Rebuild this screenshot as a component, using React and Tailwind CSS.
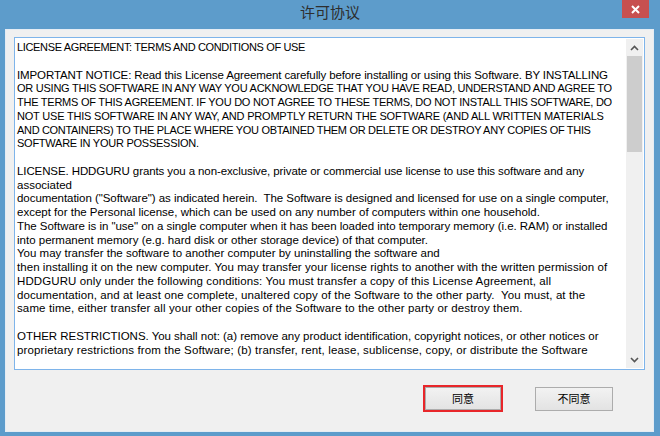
import React from "react";

// [text, size/tracking classes] — the original font is Tahoma: narrow capitals, wide lowercase
const CAPS = "text-[11px] tracking-[-0.25px]";
const MIX = "text-[11.5px]";

const LINES = [
  ["LICENSE AGREEMENT: TERMS AND CONDITIONS OF USE", "text-[11px] tracking-[-0.35px]"],
  ["", MIX],
  ["IMPORTANT NOTICE: Read this License Agreement carefully before installing or using this Software. BY INSTALLING", "text-[11.5px] tracking-[-0.12px]"],
  ["OR USING THIS SOFTWARE IN ANY WAY YOU ACKNOWLEDGE THAT YOU HAVE READ, UNDERSTAND AND AGREE TO", CAPS],
  ["THE TERMS OF THIS AGREEMENT. IF YOU DO NOT AGREE TO THESE TERMS, DO NOT INSTALL THIS SOFTWARE, DO", CAPS],
  ["NOT USE THIS SOFTWARE IN ANY WAY, AND PROMPTLY RETURN THE SOFTWARE (AND ALL WRITTEN MATERIALS", "text-[11px] tracking-[-0.2px]"],
  ["AND CONTAINERS) TO THE PLACE WHERE YOU OBTAINED THEM OR DELETE OR DESTROY ANY COPIES OF THIS", "text-[11px] tracking-[-0.32px]"],
  ["SOFTWARE IN YOUR POSSESSION.", CAPS],
  ["", MIX],
  ["LICENSE. HDDGURU grants you a non-exclusive, private or commercial use license to use this software and any", "text-[11.5px] tracking-[-0.1px]"],
  ["associated", MIX],
  ["documentation (\"Software\") as indicated herein.  The Software is designed and licensed for use on a single computer,", "text-[11.5px] tracking-[-0.05px]"],
  ["except for the Personal license, which can be used on any number of computers within one household.", MIX],
  ["The Software is in \"use\" on a single computer when it has been loaded into temporary memory (i.e. RAM) or installed", "text-[11.5px] tracking-[-0.04px]"],
  ["into permanent memory (e.g. hard disk or other storage device) of that computer.", MIX],
  ["You may transfer the software to another computer by uninstalling the software and", MIX],
  ["then installing it on the new computer. You may transfer your license rights to another with the written permission of", "text-[11.5px] tracking-[0.05px]"],
  ["HDDGURU only under the following conditions: You must transfer a copy of this License Agreement, all", "text-[11.5px] tracking-[0.1px]"],
  ["documentation, and at least one complete, unaltered copy of the Software to the other party.  You must, at the", "text-[11.5px] tracking-[0.1px]"],
  ["same time, either transfer all your other copies of the Software to the other party or destroy them.", "text-[11.5px] tracking-[0.12px]"],
  ["", MIX],
  ["OTHER RESTRICTIONS. You shall not: (a) remove any product identification, copyright notices, or other notices or", "text-[11.5px] tracking-[-0.03px]"],
  ["proprietary restrictions from the Software; (b) transfer, rent, lease, sublicense, copy, or distribute the Software", "text-[11.5px] tracking-[0.14px]"],
];

function Chevron({ up }) {
  return (
    <svg width="9" height="6" viewBox="0 0 9 6">
      <path
        d={up ? "M1 5 L4.5 1.5 L8 5" : "M1 1 L4.5 4.5 L8 1"}
        fill="none"
        stroke="#555"
        strokeWidth="1.6"
      />
    </svg>
  );
}

export default function App() {
  return (
    <div className="w-[660px] h-[436px] bg-[#5d9ccb] flex flex-col overflow-hidden">
      {/* title bar */}
      <div className="relative h-[29px] shrink-0 flex items-center justify-center">
        <span className="text-[15px] text-[#2e2e2e] [font-family:'Noto_Sans_CJK_SC',sans-serif] -mt-[5px]">
          许可协议
        </span>
        <div className="absolute top-0 right-[11px] w-[27px] h-[18px] bg-[#c75050] flex items-center justify-center">
          <svg width="9" height="9" viewBox="0 0 9 9">
            <path d="M1 1 L8 8 M8 1 L1 8" stroke="#fff" strokeWidth="2" />
          </svg>
        </div>
      </div>

      {/* client area */}
      <div className="ml-[5px] mr-[6px] h-[403px] bg-[#f0f0f0] border border-[#e4ecf4] flex flex-col">
        <div className="mt-[7px] ml-[8px] w-[631px] h-[333px] bg-white border border-[#7eb4ea] flex">
          <div className="flex-1 pl-[2px] pt-[3px] overflow-hidden leading-[13.75px] text-black [font-family:'Liberation_Sans',Arial,sans-serif]">
            {LINES.map(([text, cls], i) => (
              <div key={i} className={"whitespace-pre h-[13.75px] " + cls}>
                {text}
              </div>
            ))}
          </div>
          <div className="w-[17px] mr-[1px] my-[1px] bg-[#f0f0f0] flex flex-col">
            <div className="h-[17px] flex items-center justify-center">
              <Chevron up />
            </div>
            <div className="mx-[1px] h-[96px] bg-[#cdcdcd]" />
            <div className="flex-1" />
            <div className="h-[17px] flex items-center justify-center">
              <Chevron />
            </div>
          </div>
        </div>

        <div className="mt-[15px] flex items-center justify-end gap-[32px] pr-[40px] text-[11px] text-black [font-family:'Noto_Sans_CJK_SC',sans-serif]">
          <div className="border-2 border-[#e8262a]">
            <div className="w-[76px] h-[23px] flex items-center justify-center border border-[#acacac] bg-gradient-to-b from-[#f2f2f2] to-[#e3e3e3]">
              同意
            </div>
          </div>
          <div className="w-[78px] h-[24px] flex items-center justify-center border border-[#acacac] bg-gradient-to-b from-[#f2f2f2] to-[#e3e3e3]">
            不同意
          </div>
        </div>
      </div>
    </div>
  );
}
